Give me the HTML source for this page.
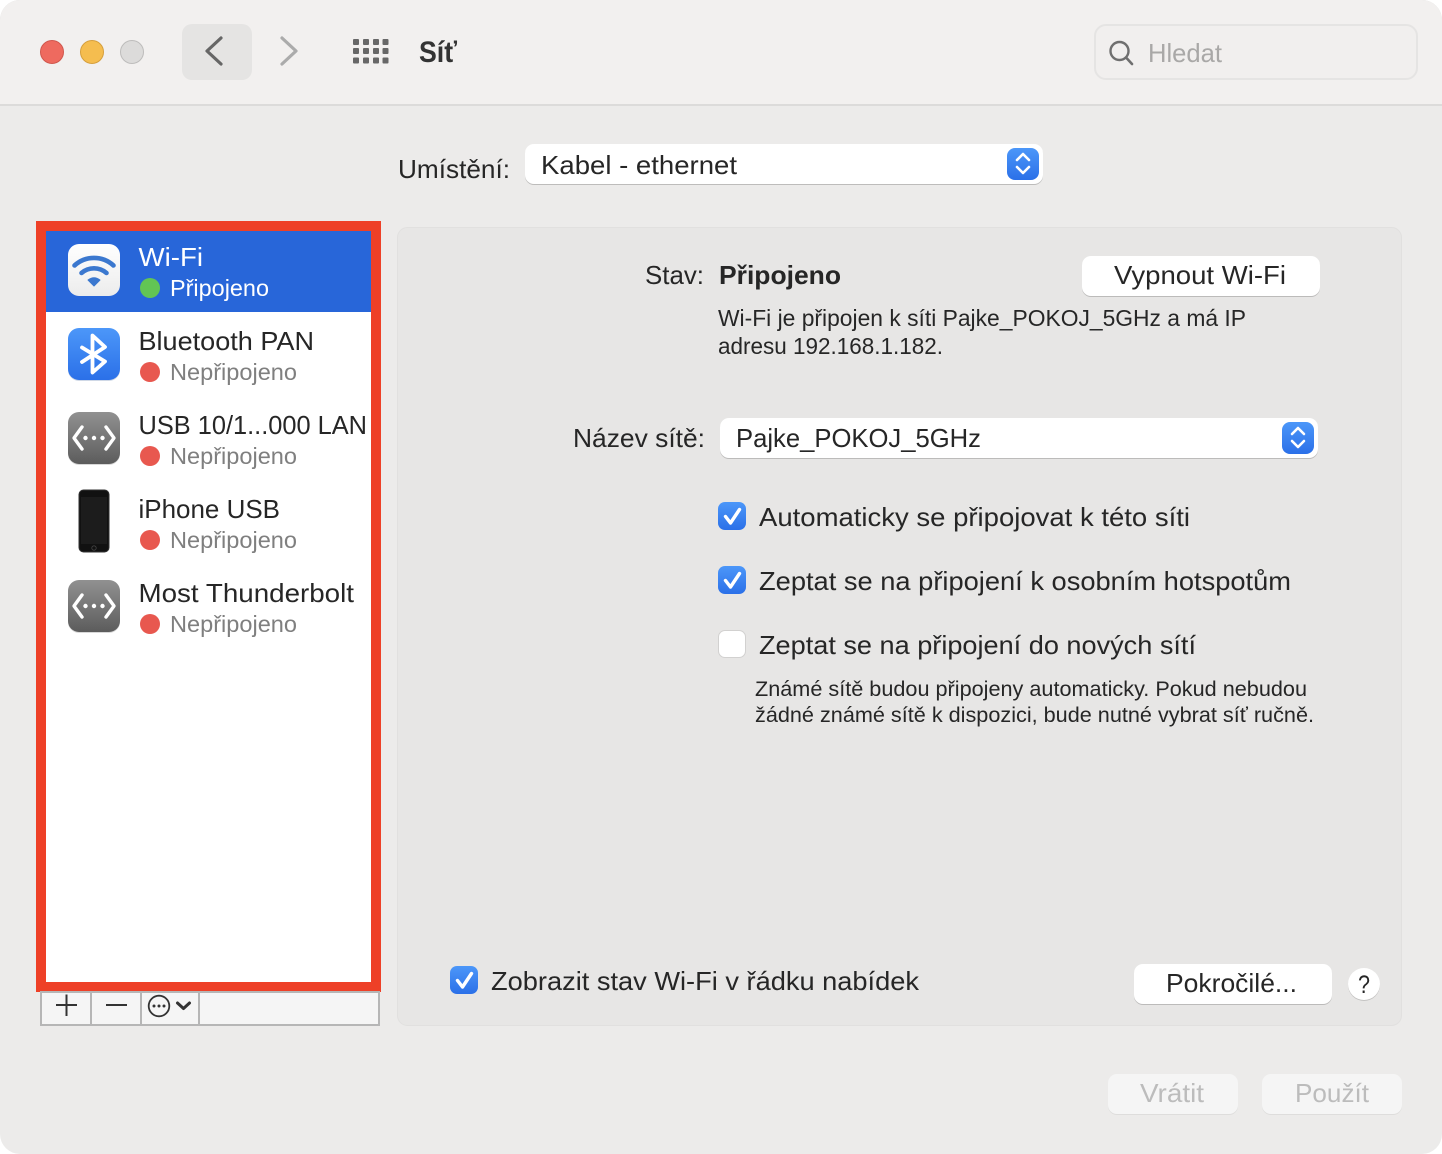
<!DOCTYPE html>
<html lang="cs">
<head>
<meta charset="utf-8">
<title>Síť</title>
<style>
html,body{margin:0;padding:0;background:#fff;width:1442px;height:1154px;overflow:hidden}
svg{display:block}
text{font-family:"Liberation Sans",sans-serif;fill:#262626;white-space:pre}
.m{font-size:26px}
.s{font-size:23px}
.xs{font-size:21px}
.b{font-weight:bold}
.g{fill:#7f7f7f}
</style>
</head>
<body>
<svg width="1442" height="1154" viewBox="0 0 1442 1154" xmlns="http://www.w3.org/2000/svg">
<defs>
<linearGradient id="blue" x1="0" y1="0" x2="0" y2="1"><stop offset="0" stop-color="#4c97f9"/><stop offset="1" stop-color="#2b70e8"/></linearGradient>
<linearGradient id="grey" x1="0" y1="0" x2="0" y2="1"><stop offset="0" stop-color="#919191"/><stop offset="1" stop-color="#5c5c5c"/></linearGradient>
<linearGradient id="wt" x1="0" y1="0" x2="0" y2="1"><stop offset="0" stop-color="#ffffff"/><stop offset="1" stop-color="#ececec"/></linearGradient>
<clipPath id="win"><rect x="0" y="0" width="1442" height="1154" rx="20"/></clipPath>
</defs>

<g clip-path="url(#win)">
<rect width="1442" height="1154" fill="#ecebea"/>
<!-- toolbar -->
<rect width="1442" height="106" fill="#dcdbda"/>
<rect width="1442" height="104" fill="#f2f0ef"/>
</g>

<!-- traffic lights -->
<circle cx="52" cy="52" r="11.500" fill="#ee6a5f" stroke="#d0574d" stroke-width="1"/>
<circle cx="92" cy="52" r="11.500" fill="#f5bd4f" stroke="#d69f3c" stroke-width="1"/>
<circle cx="132" cy="52" r="11.500" fill="#dcdbda" stroke="#bdbcbb" stroke-width="1"/>

<!-- back / forward -->
<rect x="182" y="24" width="70" height="56" rx="10" fill="#e5e4e3"/>
<path d="M221 38L207 51L221 64" fill="none" stroke="#666" stroke-width="3.200" stroke-linecap="round" stroke-linejoin="round"/>
<path d="M282 38L296 51L282 64" fill="none" stroke="#ababab" stroke-width="3.200" stroke-linecap="round" stroke-linejoin="round"/>

<!-- grid -->
<g fill="#676767">
<rect x="353" y="39" width="6" height="6" rx="1"/><rect x="363" y="39" width="6" height="6" rx="1"/><rect x="373" y="39" width="6" height="6" rx="1"/><rect x="382.500" y="39" width="6" height="6" rx="1"/>
<rect x="353" y="48" width="6" height="6" rx="1"/><rect x="363" y="48" width="6" height="6" rx="1"/><rect x="373" y="48" width="6" height="6" rx="1"/><rect x="382.500" y="48" width="6" height="6" rx="1"/>
<rect x="353" y="57.500" width="6" height="6" rx="1"/><rect x="363" y="57.500" width="6" height="6" rx="1"/><rect x="373" y="57.500" width="6" height="6" rx="1"/><rect x="382.500" y="57.500" width="6" height="6" rx="1"/>
</g>
<text x="419" y="62" font-size="30" font-weight="bold" style="fill:#333" textLength="38" lengthAdjust="spacingAndGlyphs">Síť</text>

<!-- search -->
<rect x="1095" y="25" width="322" height="54" rx="11" fill="#f1efee" stroke="#e5e4e3" stroke-width="2"/>
<circle cx="1119.500" cy="51" r="9" fill="none" stroke="#6f6f6f" stroke-width="2.400"/>
<path d="M1126.500 58L1132 64" stroke="#6f6f6f" stroke-width="2.600" stroke-linecap="round"/>
<text class="m" x="1148" y="62" style="fill:#a9a8a7" textLength="74" lengthAdjust="spacingAndGlyphs">Hledat</text>

<!-- location -->
<text class="m" x="398" y="178" textLength="112" lengthAdjust="spacingAndGlyphs">Umístění:</text>
<rect x="525" y="145" width="518" height="40" rx="9" fill="#bdbcbb"/>
<rect x="525" y="144" width="518" height="40" rx="9" fill="#fff"/>
<text class="m" x="541" y="174" textLength="196" lengthAdjust="spacingAndGlyphs">Kabel - ethernet</text>
<rect x="1007" y="148" width="32" height="32" rx="8" fill="url(#blue)"/>
<path d="M1017 160L1023 154L1029 160M1017 167L1023 173L1029 167" fill="none" stroke="#fff" stroke-width="2.600" stroke-linecap="round" stroke-linejoin="round"/>

<!-- panel -->
<rect x="397.500" y="227.500" width="1004" height="798" rx="10" fill="#e7e6e5" stroke="#e1e0df" stroke-width="1"/>

<!-- list -->
<rect x="36" y="221" width="345" height="771" fill="#ee4027"/>
<rect x="46" y="231" width="325" height="751" fill="#fff"/>
<rect x="46" y="231" width="325" height="81" fill="#2866d9"/>

<!-- bottom bar -->
<rect x="41" y="992" width="338" height="33" fill="#f5f5f5" stroke="#b6b6b6" stroke-width="2"/>
<path d="M91 992V1025M141 992V1025M199 992V1025" stroke="#b6b6b6" stroke-width="2"/>
<path d="M56 1005H77M66.500 994.500V1016" stroke="#333" stroke-width="2"/>
<path d="M106 1005H127" stroke="#333" stroke-width="2"/>
<circle cx="159" cy="1006" r="10.300" fill="none" stroke="#333" stroke-width="1.800"/>
<circle cx="154" cy="1006" r="1.500" fill="#333"/><circle cx="159" cy="1006" r="1.500" fill="#333"/><circle cx="164" cy="1006" r="1.500" fill="#333"/>
<path d="M177.500 1003L183.500 1008.500L189.500 1003" fill="none" stroke="#333" stroke-width="3" stroke-linecap="round" stroke-linejoin="round"/>

<!-- Wi-Fi row -->
<rect x="68" y="244" width="52" height="52" rx="11" fill="url(#wt)"/>
<path d="M74.500 265.500A29 29 0 0 1 113.500 265.500" fill="none" stroke="#3b78cf" stroke-width="4.600" stroke-linecap="round"/>
<path d="M81.500 273A19 19 0 0 1 106.500 273" fill="none" stroke="#3b78cf" stroke-width="4.600" stroke-linecap="round"/>
<path d="M88 280Q94 275.500 100 280L94 286Z" fill="#3b78cf" stroke="#3b78cf" stroke-width="1" stroke-linejoin="round"/>
<text class="m" x="138.500" y="266" style="fill:#fff" textLength="64.500" lengthAdjust="spacingAndGlyphs">Wi-Fi</text>
<circle cx="150" cy="288" r="10" fill="#62c554"/>
<text class="s" x="170" y="296" style="fill:#fff" textLength="99" lengthAdjust="spacingAndGlyphs">Připojeno</text>

<!-- Bluetooth -->
<rect x="68" y="329" width="52" height="52" rx="11" fill="#cfd8e6"/>
<rect x="68" y="328" width="52" height="52" rx="11" fill="url(#blue)"/>
<path d="M82 347.500L105 361.500L92.500 372.500V335.500L105 347L82 362" fill="none" stroke="#fff" stroke-width="3.800" stroke-linejoin="round" stroke-linecap="round"/>
<text class="m" x="138.500" y="350" textLength="175.500" lengthAdjust="spacingAndGlyphs">Bluetooth PAN</text>
<circle cx="150" cy="372" r="10" fill="#e8584f"/>
<text class="s g" x="170" y="380" textLength="127" lengthAdjust="spacingAndGlyphs">Nepřipojeno</text>

<!-- USB -->
<rect x="68" y="413" width="52" height="52" rx="11" fill="#d8d8d8"/>
<rect x="68" y="412" width="52" height="52" rx="11" fill="url(#grey)"/>
<path d="M82 427L74 438L82 449M106 427L114 438L106 449" fill="none" stroke="#fff" stroke-width="3.400" stroke-linecap="round" stroke-linejoin="round"/>
<circle cx="85.500" cy="438" r="2.200" fill="#fff"/><circle cx="94" cy="438" r="2.200" fill="#fff"/><circle cx="102.500" cy="438" r="2.200" fill="#fff"/>
<text class="m" x="138.500" y="434" textLength="228.500" lengthAdjust="spacingAndGlyphs">USB 10/1...000 LAN</text>
<circle cx="150" cy="456" r="10" fill="#e8584f"/>
<text class="s g" x="170" y="464" textLength="127" lengthAdjust="spacingAndGlyphs">Nepřipojeno</text>

<!-- iPhone -->
<rect x="79" y="490" width="30" height="62" rx="4.500" fill="#111" stroke="#333" stroke-width="1"/>
<rect x="81" y="497" width="26" height="47" fill="#1c1c1c"/>
<circle cx="94" cy="548" r="2.200" fill="#111" stroke="#444" stroke-width=".8"/>
<text class="m" x="138.500" y="518" textLength="141.500" lengthAdjust="spacingAndGlyphs">iPhone USB</text>
<circle cx="150" cy="540" r="10" fill="#e8584f"/>
<text class="s g" x="170" y="548" textLength="127" lengthAdjust="spacingAndGlyphs">Nepřipojeno</text>

<!-- Thunderbolt -->
<rect x="68" y="581" width="52" height="52" rx="11" fill="#d8d8d8"/>
<rect x="68" y="580" width="52" height="52" rx="11" fill="url(#grey)"/>
<path d="M82 595L74 606L82 617M106 595L114 606L106 617" fill="none" stroke="#fff" stroke-width="3.400" stroke-linecap="round" stroke-linejoin="round"/>
<circle cx="85.500" cy="606" r="2.200" fill="#fff"/><circle cx="94" cy="606" r="2.200" fill="#fff"/><circle cx="102.500" cy="606" r="2.200" fill="#fff"/>
<text class="m" x="138.500" y="602" textLength="215.500" lengthAdjust="spacingAndGlyphs">Most Thunderbolt</text>
<circle cx="150" cy="624" r="10" fill="#e8584f"/>
<text class="s g" x="170" y="632" textLength="127" lengthAdjust="spacingAndGlyphs">Nepřipojeno</text>

<!-- status -->
<text class="m" x="645" y="284" textLength="59" lengthAdjust="spacingAndGlyphs">Stav:</text>
<text class="m b" x="719" y="284" textLength="122" lengthAdjust="spacingAndGlyphs">Připojeno</text>
<rect x="1082" y="257" width="238" height="40" rx="9" fill="#bcbbba"/>
<rect x="1082" y="256" width="238" height="40" rx="9" fill="#fff"/>
<text class="m" x="1114" y="284" textLength="172" lengthAdjust="spacingAndGlyphs">Vypnout Wi-Fi</text>
<text class="s" x="718" y="326" textLength="528" lengthAdjust="spacingAndGlyphs">Wi-Fi je připojen k síti Pajke_POKOJ_5GHz a má IP</text>
<text class="s" x="718" y="354" textLength="225" lengthAdjust="spacingAndGlyphs">adresu 192.168.1.182.</text>

<!-- network name -->
<text class="m" x="573" y="447" textLength="132" lengthAdjust="spacingAndGlyphs">Název sítě:</text>
<rect x="720" y="419" width="598" height="40" rx="9" fill="#bcbbba"/>
<rect x="720" y="418" width="598" height="40" rx="9" fill="#fff"/>
<text class="m" x="736" y="447" textLength="245" lengthAdjust="spacingAndGlyphs">Pajke_POKOJ_5GHz</text>
<rect x="1282" y="422" width="32" height="32" rx="8" fill="url(#blue)"/>
<path d="M1292 434L1298 428L1304 434M1292 441L1298 447L1304 441" fill="none" stroke="#fff" stroke-width="2.600" stroke-linecap="round" stroke-linejoin="round"/>

<!-- checkboxes -->
<rect x="718" y="502" width="28" height="28" rx="7" fill="url(#blue)"/>
<path d="M725.500 516.500L730.500 523L739.500 509.500" fill="none" stroke="#fff" stroke-width="3.400" stroke-linecap="round" stroke-linejoin="round"/>
<text class="m" x="759" y="526" textLength="431" lengthAdjust="spacingAndGlyphs">Automaticky se připojovat k této síti</text>

<rect x="718" y="566" width="28" height="28" rx="7" fill="url(#blue)"/>
<path d="M725.500 580.500L730.500 587L739.500 573.500" fill="none" stroke="#fff" stroke-width="3.400" stroke-linecap="round" stroke-linejoin="round"/>
<text class="m" x="759" y="590" textLength="532" lengthAdjust="spacingAndGlyphs">Zeptat se na připojení k osobním hotspotům</text>

<rect x="718.500" y="630.500" width="27" height="27" rx="6.500" fill="#fff" stroke="#d2d1d0" stroke-width="1"/>
<text class="m" x="759" y="654" textLength="437" lengthAdjust="spacingAndGlyphs">Zeptat se na připojení do nových sítí</text>

<text class="xs" x="755" y="696" textLength="552" lengthAdjust="spacingAndGlyphs">Známé sítě budou připojeny automaticky. Pokud nebudou</text>
<text class="xs" x="755" y="722" textLength="559" lengthAdjust="spacingAndGlyphs">žádné známé sítě k dispozici, bude nutné vybrat síť ručně.</text>

<!-- panel bottom -->
<rect x="450" y="966" width="28" height="28" rx="7" fill="url(#blue)"/>
<path d="M457.500 980.500L462.500 987L471.500 973.500" fill="none" stroke="#fff" stroke-width="3.400" stroke-linecap="round" stroke-linejoin="round"/>
<text class="m" x="491" y="990" textLength="428" lengthAdjust="spacingAndGlyphs">Zobrazit stav Wi-Fi v řádku nabídek</text>

<rect x="1134" y="965" width="198" height="40" rx="9" fill="#bcbbba"/>
<rect x="1134" y="964" width="198" height="40" rx="9" fill="#fff"/>
<text class="m" x="1166" y="992" textLength="131" lengthAdjust="spacingAndGlyphs">Pokročilé...</text>

<circle cx="1364" cy="985" r="16" fill="#c4c3c2"/>
<circle cx="1364" cy="984" r="16" fill="#fff"/>
<text x="1358" y="993" font-size="25" textLength="12" lengthAdjust="spacingAndGlyphs">?</text>

<!-- bottom buttons -->
<rect x="1108" y="1075" width="130" height="40" rx="9" fill="#dedddc"/>
<rect x="1108" y="1074" width="130" height="40" rx="9" fill="#f5f5f5"/>
<text class="m" x="1140" y="1102" style="fill:#bcbcbc" textLength="64" lengthAdjust="spacingAndGlyphs">Vrátit</text>
<rect x="1262" y="1075" width="140" height="40" rx="9" fill="#dedddc"/>
<rect x="1262" y="1074" width="140" height="40" rx="9" fill="#f5f5f5"/>
<text class="m" x="1295" y="1102" style="fill:#bcbcbc" textLength="74" lengthAdjust="spacingAndGlyphs">Použít</text>
</svg>
</body>
</html>
